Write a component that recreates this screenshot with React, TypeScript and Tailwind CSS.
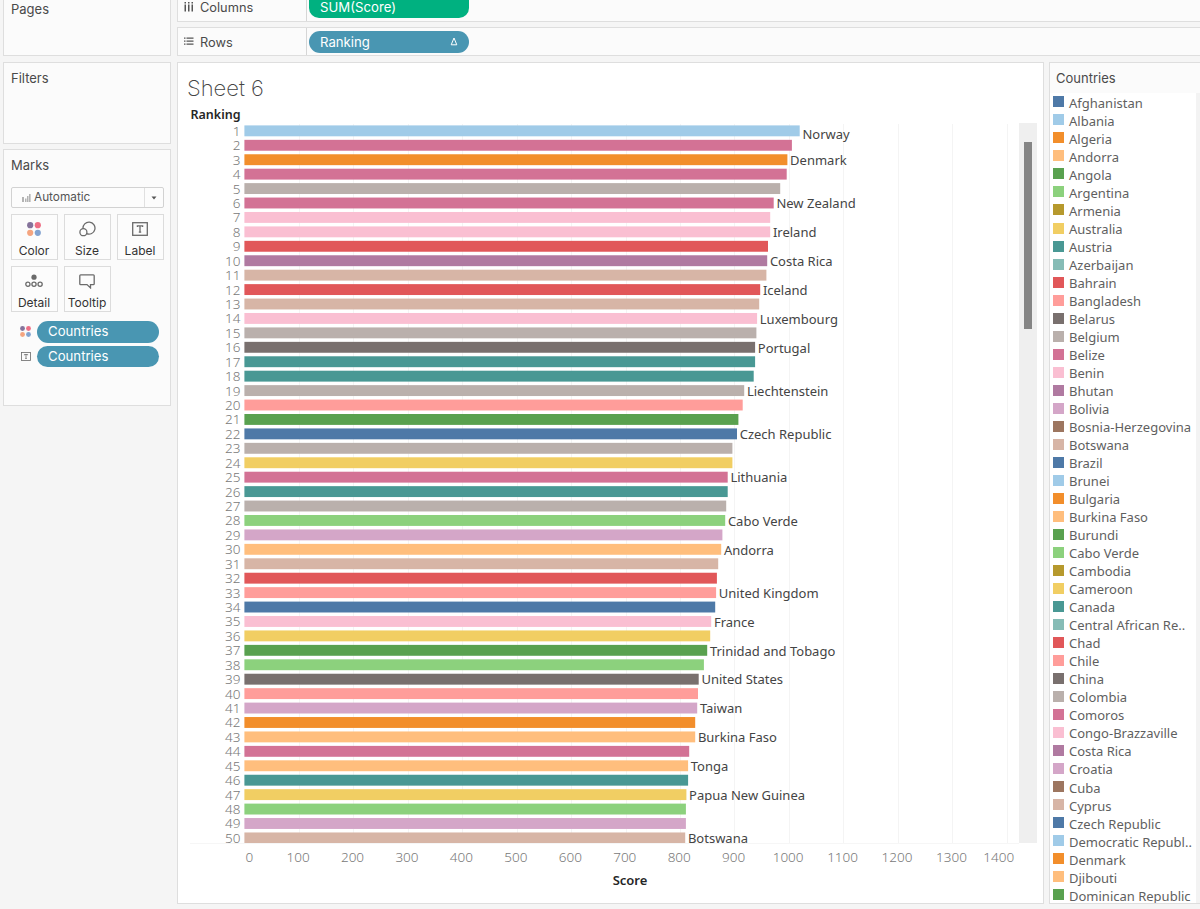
import type { ReactNode } from 'react';

const COLORS = {
    blue: '#4e79a7',
    lightBlue: '#a0cbe8',
    orange: '#f28e2b',
    lightOrange: '#ffbe7d',
    green: '#59a14f',
    lightGreen: '#8cd17d',
    olive: '#b6992d',
    yellow: '#f1ce63',
    teal: '#499894',
    lightTeal: '#86bcb6',
    red: '#e15759',
    lightRed: '#ff9d9a',
    gray: '#79706e',
    lightGray: '#bab0ac',
    pink: '#d37295',
    lightPink: '#fabfd2',
    purple: '#b07aa1',
    lightPurple: '#d4a6c8',
    brown: '#9d7660',
    lightBrown: '#d7b5a6',
};

type ColorName = keyof typeof COLORS;

const PALETTE = Object.values(COLORS);

const COUNTRIES = [
    'Afghanistan', 'Albania', 'Algeria', 'Andorra', 'Angola', 'Argentina', 'Armenia', 'Australia', 'Austria',
    'Azerbaijan', 'Bahrain', 'Bangladesh', 'Belarus', 'Belgium', 'Belize', 'Benin', 'Bhutan', 'Bolivia',
    'Bosnia-Herzegovina', 'Botswana', 'Brazil', 'Brunei', 'Bulgaria', 'Burkina Faso', 'Burundi', 'Cabo Verde',
    'Cambodia', 'Cameroon', 'Canada', 'Central African Re..', 'Chad', 'Chile', 'China', 'Colombia', 'Comoros',
    'Congo-Brazzaville', 'Costa Rica', 'Croatia', 'Cuba', 'Cyprus', 'Czech Republic', 'Democratic Republ..',
    'Denmark', 'Djibouti', 'Dominican Republic',
];

interface Bar {
    width: number;
    color: ColorName;
    label?: string;
}

const BARS: Bar[] = [
    { width: 555.3, color: 'lightBlue', label: 'Norway' },
    { width: 547.5, color: 'pink' },
    { width: 543, color: 'orange', label: 'Denmark' },
    { width: 542.3, color: 'pink' },
    { width: 535.8, color: 'lightGray' },
    { width: 529.3, color: 'pink', label: 'New Zealand' },
    { width: 525.8, color: 'lightPink' },
    { width: 525.8, color: 'lightPink', label: 'Ireland' },
    { width: 523.6, color: 'red' },
    { width: 522.8, color: 'purple', label: 'Costa Rica' },
    { width: 522, color: 'lightBrown' },
    { width: 515.8, color: 'red', label: 'Iceland' },
    { width: 514.8, color: 'lightBrown' },
    { width: 512.7, color: 'lightPink', label: 'Luxembourg' },
    { width: 512, color: 'lightGray' },
    { width: 510.7, color: 'gray', label: 'Portugal' },
    { width: 510.7, color: 'teal' },
    { width: 509.3, color: 'teal' },
    { width: 499.8, color: 'lightGray', label: 'Liechtenstein' },
    { width: 498.3, color: 'lightRed' },
    { width: 494, color: 'green' },
    { width: 492.6, color: 'blue', label: 'Czech Republic' },
    { width: 488, color: 'lightGray' },
    { width: 488, color: 'yellow' },
    { width: 483.3, color: 'pink', label: 'Lithuania' },
    { width: 483.3, color: 'teal' },
    { width: 481.8, color: 'lightGray' },
    { width: 480.8, color: 'lightGreen', label: 'Cabo Verde' },
    { width: 478, color: 'lightPurple' },
    { width: 476.8, color: 'lightOrange', label: 'Andorra' },
    { width: 473.8, color: 'lightBrown' },
    { width: 472.5, color: 'red' },
    { width: 471.7, color: 'lightRed', label: 'United Kingdom' },
    { width: 470.8, color: 'blue' },
    { width: 466.8, color: 'lightPink', label: 'France' },
    { width: 465.8, color: 'yellow' },
    { width: 462.8, color: 'green', label: 'Trinidad and Tobago' },
    { width: 459.5, color: 'lightGreen' },
    { width: 454.3, color: 'gray', label: 'United States' },
    { width: 453.6, color: 'lightRed' },
    { width: 452.8, color: 'lightPurple', label: 'Taiwan' },
    { width: 450.8, color: 'orange' },
    { width: 450.8, color: 'lightOrange', label: 'Burkina Faso' },
    { width: 444.8, color: 'pink' },
    { width: 443.7, color: 'lightOrange', label: 'Tonga' },
    { width: 443.7, color: 'teal' },
    { width: 442, color: 'yellow', label: 'Papua New Guinea' },
    { width: 441.5, color: 'lightGreen' },
    { width: 441.5, color: 'lightPurple' },
    { width: 440.8, color: 'lightBrown', label: 'Botswana' },
];

const TICKS = [0, 100, 200, 300, 400, 500, 600, 700, 800, 900, 1000, 1100, 1200, 1300, 1400];

const ROW_HEIGHT = 14.43;
const TICK_WIDTH = 54.45;
const PLOT_LEFT = 54.4;

function tickX(value: number) {
    // the outermost labels are pulled inside the plot
    if (value === 0) return PLOT_LEFT + 5;
    if (value === 1400) return PLOT_LEFT + 14 * TICK_WIDTH - 8;
    return PLOT_LEFT + (value / 100) * TICK_WIDTH - 0.8;
}

function Chart() {
    return (
        <svg width="829" height="776" className="block shrink-0 font-['Noto_Sans',sans-serif]">
            <defs>
                <clipPath id="plot">
                    <rect x="0" y="0" width="829" height="720" />
                </clipPath>
            </defs>
            {TICKS.slice(1).map((tick) => (
                <line
                    key={tick}
                    x1={Math.round(PLOT_LEFT + (tick / 100) * TICK_WIDTH) + 0.5}
                    x2={Math.round(PLOT_LEFT + (tick / 100) * TICK_WIDTH) + 0.5}
                    y1="1"
                    y2="720"
                    stroke="#f4f4f4"
                />
            ))}
            <line x1="0" x2="829" y1="720.5" y2="720.5" stroke="#f6f6f6" />
            <g clipPath="url(#plot)">
                {BARS.map((bar, i) => {
                    const top = 2.4 + i * ROW_HEIGHT;
                    return (
                        <g key={i}>
                            <text x="50.5" y={top + 10.4} textAnchor="end" className="fill-[#787878] text-[13.5px] font-light">
                                {i + 1}
                            </text>
                            <rect x={PLOT_LEFT} y={top} width={bar.width} height="10.9" fill={COLORS[bar.color]} />
                            {bar.label && (
                                <text
                                    x={PLOT_LEFT + bar.width + 2.7}
                                    y={top + (i === 0 ? 13.7 : 10.7)}
                                    className="fill-[#444] text-[13px]"
                                >
                                    {bar.label}
                                </text>
                            )}
                        </g>
                    );
                })}
            </g>
            {TICKS.map((tick) => (
                <text key={tick} x={tickX(tick)} y="739" textAnchor="middle" className="fill-[#787878] text-[13.5px] font-light">
                    {tick}
                </text>
            ))}
            <text x="440" y="762" textAnchor="middle" className="fill-[#262626] text-[13px] font-semibold">
                Score
            </text>
        </svg>
    );
}

function ColorDots({ size }: { size: number }) {
    return (
        <svg width={size} height={size} viewBox="0 0 14 14">
            <circle cx="3.2" cy="3.2" r="3.1" fill="#85739b" />
            <circle cx="10.8" cy="3.2" r="3.1" fill="#ee6f85" />
            <circle cx="3.2" cy="10.8" r="3.1" fill="#f5a580" />
            <circle cx="10.8" cy="10.8" r="3.1" fill="#83a3d0" />
        </svg>
    );
}

function LabelIcon({ small }: { small?: boolean }) {
    return (
        <svg width={small ? 10 : 16} height={small ? 9 : 14} viewBox="0 0 16 14" fill="none" stroke="#6b6b6b">
            <rect x="0.7" y="0.7" width="14.6" height="12.6" strokeWidth="1.3" />
            <path d="M5.4 5V3.8h5.2V5M8 3.8v6.4M6.8 10.2h2.4" strokeWidth="1.3" />
        </svg>
    );
}

function SizeIcon() {
    return (
        <svg width="17" height="16" viewBox="0 0 17 16" fill="none" stroke="#6b6b6b" strokeWidth="1.3">
            <path d="M4 7.600A6 6 0 1 1 7.600 12.600" />
            <circle cx="4.400" cy="11.200" r="3.500" />
        </svg>
    );
}

function DetailIcon() {
    return (
        <svg width="18" height="14" viewBox="0 0 18 14" fill="none" stroke="#6b6b6b" strokeWidth="1.3">
            <circle cx="9" cy="3.2" r="2.6" fill="#6b6b6b" stroke="none" />
            <circle cx="2.9" cy="10.3" r="2.1" />
            <circle cx="9" cy="10.3" r="2.1" />
            <circle cx="15.1" cy="10.3" r="2.1" />
        </svg>
    );
}

function TooltipIcon() {
    return (
        <svg width="16" height="15" viewBox="0 0 16 15" fill="none" stroke="#6b6b6b" strokeWidth="1.3">
            <path d="M1.7.8h12.6q.9 0 .9.9v8q0 .9-.9.9h-2.8v3.3L8 10.6H1.7q-.9 0-.9-.9v-8q0-.9.9-.9Z" />
        </svg>
    );
}

function MarkButton({ icon, label }: { icon: ReactNode; label: string }) {
    return (
        <button className="flex h-[46px] w-[47px] flex-col items-center border border-[#dcdcdc] bg-[#fcfcfc] pr-px">
            <span className="flex h-[28px] items-center justify-center">{icon}</span>
            <span className="mt-px text-[12px] leading-[14px] whitespace-nowrap text-[#333]">{label}</span>
        </button>
    );
}

function MarkPill({ icon, label }: { icon: ReactNode; label: string }) {
    return (
        <div className="flex items-center">
            <span className="flex w-[29px] justify-center">{icon}</span>
            <span className="ml-[-3px] h-[21.5px] w-[122px] rounded-full bg-[#4996b2] pl-[11px] text-[13.2px] leading-[21.5px] text-white">
                {label}
            </span>
        </div>
    );
}

function Sidebar() {
    return (
        <aside className="flex w-[168px] shrink-0 flex-col">
            <section className="h-[56px] border border-t-0 border-[#dedede] bg-[#fbfbfb] pl-[7px]">
                <h2 className="text-[13px] leading-[18px]">Pages</h2>
            </section>
            <section className="mt-[6px] h-[82px] border border-[#dedede] bg-[#fbfbfb] pt-[6px] pl-[7px]">
                <h2 className="text-[13px] leading-[18px]">Filters</h2>
            </section>
            <section className="mt-[5px] h-[257px] border border-[#dedede] bg-[#fbfbfb] pt-[6px] pl-[7px]">
                <h2 className="text-[13px] leading-[18px]">Marks</h2>
                <div className="mt-[13px] flex h-[21px] w-[153px] items-center rounded-[2px] border border-[#d2d2d2] bg-[#fcfcfc]">
                    <svg width="9" height="8" viewBox="0 0 9 8" className="ml-[10px]" fill="#b3b3b3">
                        <path d="M0 3h2v5H0zM3 4.500h1.500V8H3zM5 2h1.500v6H5zM7 0h1.600v8H7z" />
                    </svg>
                    <span className="ml-[3px] flex-1 text-[11.8px] text-[#555]">Automatic</span>
                    <span className="flex h-full w-[19px] items-center justify-center border-l border-[#e0e0e0]">
                        <svg width="6" height="4" viewBox="0 0 6 4" fill="#555">
                            <path d="M.5.5h5L3 3.400z" />
                        </svg>
                    </span>
                </div>
                <div className="mt-[6px] grid grid-cols-[47px_47px_47px] gap-x-[6px] gap-y-[6px]">
                    <MarkButton icon={<ColorDots size={14} />} label="Color" />
                    <MarkButton icon={<SizeIcon />} label="Size" />
                    <MarkButton icon={<LabelIcon />} label="Label" />
                    <MarkButton icon={<DetailIcon />} label="Detail" />
                    <MarkButton icon={<TooltipIcon />} label="Tooltip" />
                </div>
                <div className="mt-[9px] flex flex-col gap-[3px]">
                    <MarkPill icon={<ColorDots size={11} />} label="Countries" />
                    <MarkPill icon={<LabelIcon small />} label="Countries" />
                </div>
            </section>
        </aside>
    );
}

function Shelves() {
    return (
        <>
            <div className="flex h-[22px] border-b border-l border-[#dedede] bg-[#fbfbfb]">
                <div className="flex w-[129px] border-r border-[#d6d6d6] pl-[6px]">
                    <svg width="10" height="10" viewBox="0 0 10 10" className="mt-[2px]" fill="#555">
                        <path d="M.5 0h1.500v1.500H.5zM.5 2.500h1.500v7H.5zM4 0h1.500v1.500H4zM4 2.500h1.500v7H4zM7.500 0H9v1.500H7.500zM7.500 2.500H9v7H7.500z" />
                    </svg>
                    <span className="ml-[6px] text-[12.8px] leading-[16px]">Columns</span>
                </div>
                <div className="ml-[2px] h-[18px] w-[160px] rounded-b-[10px] bg-[#00b180] pl-[11px] text-[13.2px] leading-[15px] text-white">
                    SUM(Score)
                </div>
            </div>
            <div className="mt-[5px] flex h-[29px] items-center border-y border-l border-[#dedede] bg-[#fbfbfb]">
                <div className="flex h-full w-[129px] items-center border-r border-[#d6d6d6] pl-[6px]">
                    <svg width="10" height="9" viewBox="0 0 10 9" fill="#555">
                        <path d="M0 .5h1.500v1.300H0zM2.500.5h7v1.300h-7zM0 3.500h1.500v1.300H0zM2.500 3.500h7v1.300h-7zM0 6.500h1.500v1.300H0zM2.500 6.500h7v1.300h-7z" />
                    </svg>
                    <span className="ml-[6px] pt-[2px] text-[12.8px]">Rows</span>
                </div>
                <div className="ml-[2px] flex h-[22px] w-[160px] items-center justify-between rounded-full bg-[#4996b2] pr-[11px] pl-[11px] text-[13.2px] text-white">
                    <span className="pt-[2px]">Ranking</span>
                    <svg width="8" height="9" viewBox="0 0 8 9" fill="none" stroke="white">
                        <path d="M4 1 6.800 7.800H1.200Z" />
                    </svg>
                </div>
            </div>
        </>
    );
}

function Sheet() {
    return (
        <section className="h-[842px] w-[867px] shrink-0 border border-[#dedede] bg-white">
            <h1 className="mt-[11px] ml-[9px] text-[22px] leading-[28px] font-extralight text-[#444]">Sheet 6</h1>
            <h3 className="mt-[5px] ml-[12.5px] font-['Noto_Sans',sans-serif] text-[12.5px] leading-[16px] font-semibold text-[#262626]">
                Ranking
            </h3>
            <div className="ml-[12px] flex">
                <Chart />
                <div className="h-[720px] w-[18px] bg-[#efefef]">
                    <div className="mx-auto mt-[19px] h-[187px] w-[8px] bg-[#858585]" />
                </div>
            </div>
        </section>
    );
}

function Legend() {
    return (
        <section className="ml-[5px] h-[842px] flex-1 overflow-hidden border border-r-0 border-[#dedede] bg-[#fbfbfb]">
            <h2 className="h-[30px] pt-[6px] pl-[6px] text-[13px] leading-[18px]">Countries</h2>
            <div className="flex h-[810px] bg-white">
                <ul className="h-full flex-1 overflow-hidden pt-[0.4px] font-['Noto_Sans',sans-serif]">
                    {COUNTRIES.map((country, i) => (
                        <li key={country} className="flex h-[18.03px] items-center pl-[3px]">
                            <span className="mb-px h-[11px] w-[11px]" style={{ backgroundColor: PALETTE[i % 20] }} />
                            <span className="mt-px ml-[5px] text-[13px] leading-[18px] whitespace-nowrap text-[#5f5f5f]">{country}</span>
                        </li>
                    ))}
                </ul>
                <div className="w-[4px] bg-[#f3f3f3]" />
            </div>
        </section>
    );
}

export default function App() {
    return (
        <div className="flex h-[909px] w-[1200px] overflow-hidden bg-[#f5f5f5] pl-[3px] font-[Inter,sans-serif] text-[#4a4a4a]">
            <Sidebar />
            <main className="ml-[6px] flex min-w-0 flex-1 flex-col">
                <Shelves />
                <div className="mt-[6px] flex">
                    <Sheet />
                    <Legend />
                </div>
            </main>
        </div>
    );
}
